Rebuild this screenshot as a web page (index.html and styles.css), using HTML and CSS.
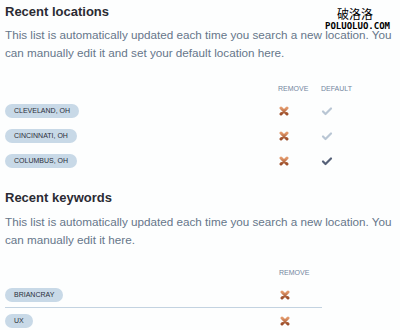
FILE: index.html
```html
<!DOCTYPE html>
<html lang="en">
<head>
    <meta charset="UTF-8">
    <title>Recent locations</title>
    <link rel="stylesheet" href="styles.css">
</head>
<body>
    <div class="watermark">
        <span class="wm-cn">破洛洛</span>
        <span class="wm-en">POLUOLUO.COM</span>
    </div>

    <div class="section">
        <h2>Recent locations</h2>
        <p>This list is automatically updated each time you search a new location. You can manually edit it and set your default location here.</p>

        <div class="list list-locations">
            <div class="list-head">
                <span></span>
                <span class="col">Remove</span>
                <span class="col">Default</span>
            </div>
            <div class="list-row">
                <span class="pill">Cleveland, OH</span>
                <span class="col"><svg class="icon-x" viewBox="0 0 10 10"><use href="#x"/></svg></span>
                <span class="col"><svg class="icon-check" viewBox="0 0 12 10"><use href="#check"/></svg></span>
            </div>
            <div class="list-row">
                <span class="pill">Cincinnati, OH</span>
                <span class="col"><svg class="icon-x" viewBox="0 0 10 10"><use href="#x"/></svg></span>
                <span class="col"><svg class="icon-check" viewBox="0 0 12 10"><use href="#check"/></svg></span>
            </div>
            <div class="list-row">
                <span class="pill">Columbus, OH</span>
                <span class="col"><svg class="icon-x" viewBox="0 0 10 10"><use href="#x"/></svg></span>
                <span class="col"><svg class="icon-check active" viewBox="0 0 12 10"><use href="#check"/></svg></span>
            </div>
        </div>
    </div>

    <div class="section">
        <h2>Recent keywords</h2>
        <p>This list is automatically updated each time you search a new location. You can manually edit it here.</p>

        <div class="list list-keywords">
            <div class="list-head">
                <span></span>
                <span class="col">Remove</span>
            </div>
            <div class="list-row divided">
                <span class="pill">briancray</span>
                <span class="col"><svg class="icon-x" viewBox="0 0 10 10"><use href="#x"/></svg></span>
            </div>
            <div class="list-row">
                <span class="pill">ux</span>
                <span class="col"><svg class="icon-x" viewBox="0 0 10 10"><use href="#x"/></svg></span>
            </div>
        </div>
    </div>

    <svg class="defs" width="0" height="0">
        <defs>
            <linearGradient id="xgrad" x1="0" y1="0" x2="0" y2="1">
                <stop offset="0" stop-color="#e39a6c"/>
                <stop offset="1" stop-color="#9c4f2c"/>
            </linearGradient>
            <g id="x">
                <path d="M2 2 L8 8 M8 2 L2 8" stroke="url(#xgrad)" stroke-width="3" stroke-linecap="round"/>
            </g>
            <g id="check">
                <path d="M2 5.5 L4.5 8 L10 2.5" fill="none" stroke="currentColor" stroke-width="2.2" stroke-linecap="round" stroke-linejoin="round"/>
            </g>
        </defs>
    </svg>
</body>
</html>
```

FILE: styles.css
```css
body {
    margin: 0;
    padding: 0 0 0 5px;
    background-color: #fdfefe;
    font-family: "Liberation Sans", Arial, sans-serif;
    position: relative;
}

/* site watermark, top right */
.watermark {
    position: absolute;
    top: 8px;
    right: 10px;
    display: flex;
    flex-direction: column;
    align-items: center;
    color: #000;
    line-height: 1;
}

.wm-cn {
    font-family: "Noto Sans CJK SC", sans-serif;
    font-size: 12px;
    margin-right: 5px;
}

.wm-en {
    font-family: "DejaVu Sans Mono", monospace;
    font-size: 9px;
    font-weight: bold;
    margin-top: 2px;
}

.section h2 {
    margin: 0;
    padding-top: 4px;
    font-size: 13px;
    line-height: 15px;
    color: #2b2b33;
}

.section p {
    margin: 7px 0 0;
    font-size: 11.7px;
    line-height: 18px;
    color: #66768a;
}

.section + .section {
    margin-top: 13px;
}

.section + .section p {
    margin-top: 8px;
}

.list {
    margin-top: 21px;
}

.list-locations {
    width: 360px;
}

.list-keywords {
    margin-top: 18px;
    width: 317px;
}

.list-head,
.list-row {
    display: grid;
    grid-template-columns: 1fr 43px 44px;
    align-items: center;
}

.list-keywords .list-head,
.list-keywords .list-row {
    grid-template-columns: 1fr 43px;
}

.list-head {
    font-size: 7px;
    text-transform: uppercase;
    color: #7486a0;
    height: 10px;
    margin-bottom: 5px;
}

.list-row {
    height: 25px;
}

.list-row.divided {
    border-bottom: 1px solid #c3d3e1;
}

.pill {
    justify-self: start;
    height: 14px;
    line-height: 14px;
    padding: 0 9px;
    border-radius: 7px;
    background-color: #c8d9e7;
    color: #2a2f3a;
    font-size: 7px;
    text-transform: uppercase;
}

.col {
    display: flex;
    align-items: center;
}

.icon-x {
    width: 10px;
    height: 10px;
    margin-left: 1px;
}

.icon-check {
    width: 12px;
    height: 10px;
    color: #b9c6d4;
}

.icon-check.active {
    color: #566178;
}

.defs {
    position: absolute;
}
```
